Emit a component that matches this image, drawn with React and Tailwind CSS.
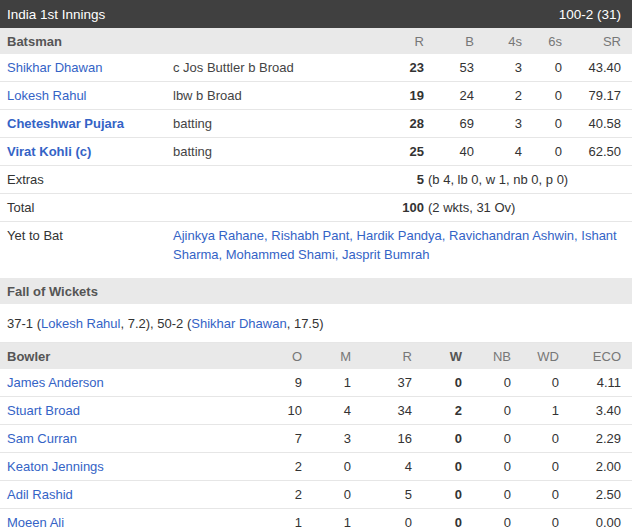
const batsmen = [
  { name: "Shikhar Dhawan", how: "c Jos Buttler b Broad", r: 23, b: 53, f: 3, s: 0, sr: "43.40" },
  { name: "Lokesh Rahul", how: "lbw b Broad", r: 19, b: 24, f: 2, s: 0, sr: "79.17" },
  { name: "Cheteshwar Pujara", how: "batting", r: 28, b: 69, f: 3, s: 0, sr: "40.58", notOut: true },
  { name: "Virat Kohli (c)", how: "batting", r: 25, b: 40, f: 4, s: 0, sr: "62.50", notOut: true },
];

const bowlers = [
  { name: "James Anderson", o: 9, m: 1, r: 37, w: 0, nb: 0, wd: 0, eco: "4.11" },
  { name: "Stuart Broad", o: 10, m: 4, r: 34, w: 2, nb: 0, wd: 1, eco: "3.40" },
  { name: "Sam Curran", o: 7, m: 3, r: 16, w: 0, nb: 0, wd: 0, eco: "2.29" },
  { name: "Keaton Jennings", o: 2, m: 0, r: 4, w: 0, nb: 0, wd: 0, eco: "2.00" },
  { name: "Adil Rashid", o: 2, m: 0, r: 5, w: 0, nb: 0, wd: 0, eco: "2.50" },
  { name: "Moeen Ali", o: 1, m: 1, r: 0, w: 0, nb: 0, wd: 0, eco: "0.00" },
];

const link = "text-[#3463c6]";
const row = "flex items-center h-[28px] border-b border-[#e6e6e6] pl-[7px] pr-[11px]";
const head = "flex items-center h-[26px] bg-[#e9e9e9] pl-[7px] pr-[11px] text-[#777]";

function BatCols({ r, b, f, s, sr, bold }) {
  return (
    <>
      <div className={`w-[40px] text-right ${bold ? "font-bold text-[#333]" : ""}`}>{r}</div>
      <div className="w-[50px] text-right">{b}</div>
      <div className="w-[48px] text-right">{f}</div>
      <div className="w-[40px] text-right">{s}</div>
      <div className="w-[59px] text-right">{sr}</div>
    </>
  );
}

function BowlCols({ o, m, r, w, nb, wd, eco, bold }) {
  return (
    <>
      <div className="w-[40px] text-right">{o}</div>
      <div className="w-[49px] text-right">{m}</div>
      <div className="w-[61px] text-right">{r}</div>
      <div className={`w-[50px] text-right ${bold ? "font-bold text-[#333]" : ""}`}>{w}</div>
      <div className="w-[49px] text-right">{nb}</div>
      <div className="w-[48px] text-right">{wd}</div>
      <div className="w-[62px] text-right">{eco}</div>
    </>
  );
}

export default function App() {
  return (
    <div className="w-[632px] bg-white text-[13px] leading-[19px] text-[#333] font-['Liberation_Sans',Arial,sans-serif]">
      <div className="flex items-center justify-between h-[28px] bg-[#404040] text-white text-[13.5px] pl-[7px] pr-[11px]">
        <span>India 1st Innings</span>
        <span>100-2 (31)</span>
      </div>

      <div className={head}>
        <div className="w-[166px] font-bold text-[#555]">Batsman</div>
        <div className="flex-1" />
        <BatCols r="R" b="B" f="4s" s="6s" sr="SR" />
      </div>
      {batsmen.map((p) => (
        <div key={p.name} className={row}>
          <div className={`w-[166px] ${link} ${p.notOut ? "font-bold" : ""}`}>{p.name}</div>
          <div className="flex-1 text-[#444]">{p.how}</div>
          <BatCols {...p} bold />
        </div>
      ))}
      <div className={row}>
        <div className="w-[166px]">Extras</div>
        <div className="flex-1" />
        <div className="w-[40px] text-right font-bold">5</div>
        <div className="w-[197px] pl-[4px] whitespace-nowrap">(b 4, lb 0, w 1, nb 0, p 0)</div>
      </div>
      <div className={row}>
        <div className="w-[166px]">Total</div>
        <div className="flex-1" />
        <div className="w-[40px] text-right font-bold">100</div>
        <div className="w-[197px] pl-[4px] whitespace-nowrap">(2 wkts, 31 Ov)</div>
      </div>
      <div className="flex items-start pt-[4px] pb-[14px] pl-[7px] pr-[11px]">
        <div className="w-[166px] shrink-0">Yet to Bat</div>
        <div className={`w-[448px] ${link}`}>
          Ajinkya Rahane, Rishabh Pant, Hardik Pandya, Ravichandran Ashwin, Ishant Sharma, Mohammed Shami, Jasprit Bumrah
        </div>
      </div>

      <div className={head}>
        <div className="font-bold text-[#555]">Fall of Wickets</div>
      </div>
      <div className="flex items-center h-[39px] border-b border-[#e6e6e6] pl-[7px]">
        <span>
          37-1 (<span className={link}>Lokesh Rahul</span>, 7.2), 50-2 (<span className={link}>Shikhar Dhawan</span>, 17.5)
        </span>
      </div>

      <div className={head}>
        <div className="flex-1 font-bold text-[#555]">Bowler</div>
        <BowlCols o="O" m="M" r="R" w={<span className="font-bold text-[#555]">W</span>} nb="NB" wd="WD" eco="ECO" />
      </div>
      {bowlers.map((p) => (
        <div key={p.name} className={row}>
          <div className={`flex-1 ${link}`}>{p.name}</div>
          <BowlCols {...p} bold />
        </div>
      ))}
    </div>
  );
}
